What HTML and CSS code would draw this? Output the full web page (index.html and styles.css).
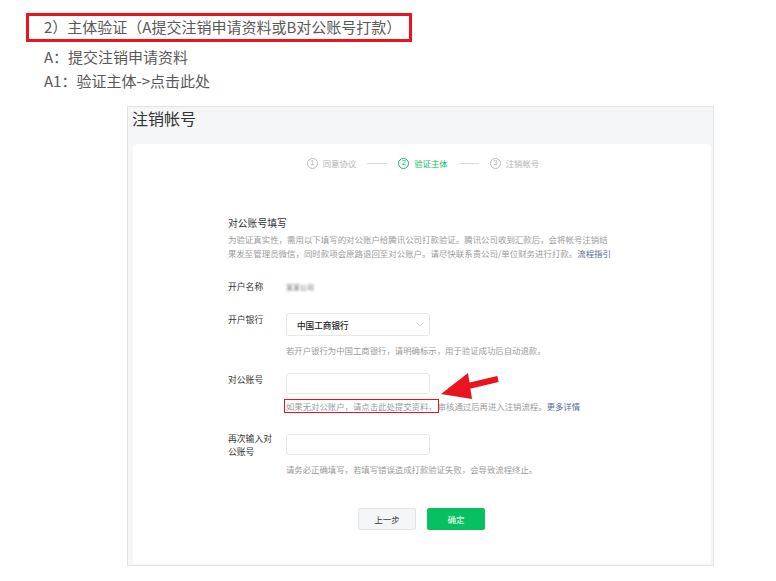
FILE: index.html
```html
<!DOCTYPE html>
<html lang="zh-CN">
<head>
<meta charset="utf-8">
<title>注销帐号 - 主体验证</title>
<link rel="stylesheet" href="styles.css">
</head>
<body>
<div class="doc">
  <div class="hl-title">2）主体验证（A提交注销申请资料或B对公账号打款）</div>
  <p class="doc-line">A：提交注销申请资料</p>
  <p class="doc-line">A1：验证主体-&gt;点击此处</p>

  <div class="shot">
    <div class="shot-title">注销帐号</div>
    <div class="card">
      <div class="steps">
        <div class="step"><span class="num">1</span>同意协议</div>
        <span class="step-line"></span>
        <div class="step active"><span class="num">2</span>验证主体</div>
        <span class="step-line"></span>
        <div class="step"><span class="num">3</span>注销帐号</div>
      </div>

      <div class="form">
        <div class="form-head">对公账号填写</div>
        <p class="form-desc">为验证真实性，需用以下填写的对公账户给腾讯公司打款验证。腾讯公司收到汇款后，会将帐号注销结<br>果发至管理员微信，同时款项会原路退回至对公账户。请尽快联系贵公司/单位财务进行打款。<a class="link">流程指引</a></p>

        <div class="row row-name">
          <div class="label">开户名称</div>
          <div class="field"><span class="blurred">某某公司</span></div>
        </div>

        <div class="row row-bank">
          <div class="label">开户银行</div>
          <div class="field">
            <div class="select">
              <span>中国工商银行</span>
              <svg class="chev" width="8" height="5" viewBox="0 0 8 5"><polyline points="0.5,0.5 4,4 7.5,0.5" fill="none" stroke="#c8c8c8" stroke-width="0.9"/></svg>
            </div>
            <div class="hint">若开户银行为中国工商银行，请明确标示，用于验证成功后自动退款。</div>
          </div>
        </div>

        <div class="row row-acct">
          <div class="label">对公账号</div>
          <div class="field">
            <div class="input"></div>
            <div class="hint hint-tight"><span class="mark">如果无对公账户，请点击此处提交资料，</span>审核通过后再进入注销流程。<a class="link">更多详情</a></div>
          </div>
        </div>

        <div class="row row-again">
          <div class="label label-2">再次输入对<br>公账号</div>
          <div class="field">
            <div class="input input-2"></div>
            <div class="hint">请务必正确填写，若填写错误造成打款验证失败，会导致流程终止。</div>
          </div>
        </div>

        <div class="actions">
          <button class="btn btn-default">上一步</button>
          <button class="btn btn-primary">确定</button>
        </div>
      </div>
    </div>

    <svg class="arrow" width="64" height="32" viewBox="0 0 64 32">
      <polygon points="1,22 28,1 32,27" fill="#e8141e"/>
      <line x1="26" y1="14.5" x2="58" y2="7" stroke="#e8141e" stroke-width="6"/>
    </svg>
  </div>
</div>
</body>
</html>
```

FILE: styles.css
```css
* { box-sizing: border-box; }
html, body { margin: 0; padding: 0; background: #fff; }
body {
  font-family: "Noto Sans CJK SC", "Noto Sans", "Liberation Sans", sans-serif;
  color: #555;
}
.doc { padding: 13px 0 0 26px; }

.hl-title {
  display: inline-block;
  width: 386px;
  height: 29px;
  border: 3px solid #e8141e;
  padding-left: 15px;
  font-size: 15px;
  line-height: 22px;
  color: #595959;
  white-space: nowrap;
}
.doc-line {
  margin: 0;
  padding-left: 18px;
  font-size: 15px;
  line-height: 24px;
  height: 24px;
  color: #595959;
}
.doc-line:first-of-type { margin-top: 3px; }

.shot {
  position: relative;
  margin: 13px 0 0 101px;
  width: 587px;
  height: 460px;
  border: 1px solid #e3e3e3;
  background: #f5f6f7;
  display: flex;
  flex-direction: column;
}
.shot-title {
  height: 37px;
  padding-left: 4px;
  font-size: 16px;
  line-height: 22px;
  color: #333;
}
.card {
  flex: 1;
  margin: 0 2px 1px 5px;
  background: #fff;
  border-radius: 4px 4px 0 0;
  padding-top: 13px;
}

.steps {
  display: flex;
  justify-content: center;
  align-items: center;
  height: 12px;
  gap: 11px;
  font-size: 8.4px;
  color: #b2b2b2;
  padding-left: 2px;
}
.step { display: flex; align-items: center; gap: 5px; white-space: nowrap; }
.step .num {
  width: 11px;
  height: 11px;
  border: 1px solid #b9b9b9;
  border-radius: 50%;
  display: inline-flex;
  align-items: center;
  justify-content: center;
  font-family: "Liberation Sans", sans-serif;
  font-size: 7.5px;
  line-height: 1;
}
.step.active { color: #07c160; }
.step.active .num { border-color: #07c160; }
.step-line { width: 20px; height: 1px; background: #dcdcdc; }

.form { padding: 47px 0 0 95px; }
.form-head {
  font-size: 9.8px;
  line-height: 14px;
  color: #353535;
}
.form-desc {
  margin: 2px 0 0;
  font-size: 8.45px;
  line-height: 14px;
  color: #9a9a9a;
  white-space: nowrap;
}
.link { color: #576b95; }

.row { display: flex; }
.label {
  width: 58px;
  flex: none;
  font-size: 8.8px;
  line-height: 14px;
  color: #353535;
}
.field { display: flex; flex-direction: column; align-items: flex-start; }
.row-name { margin-top: 20px; }
.row-bank { margin-top: 19px; }
.row-acct { margin-top: 16px; }
.row-again { margin-top: 20px; }

.blurred {
  font-size: 7px;
  line-height: 14px;
  color: #6f6f6f;
  filter: blur(0.8px);
}
.select {
  width: 144px;
  height: 23px;
  border: 1px solid #e7e7e7;
  border-radius: 3px;
  display: flex;
  align-items: center;
  justify-content: space-between;
  padding: 0 5px 0 10px;
  font-size: 8.6px;
  font-weight: 500;
  color: #222;
}
.chev { display: block; }
.input {
  width: 144px;
  height: 21px;
  border: 1px solid #e7e7e7;
  border-radius: 3px;
}
.input-2 { height: 21px; margin-top: 1px; }
.hint {
  margin-top: 7px;
  font-size: 8.4px;
  line-height: 14px;
  color: #9a9a9a;
  white-space: nowrap;
}
.hint-tight { margin-top: 5px; }
.mark {
  outline: 1.6px solid #e8141e;
  outline-offset: 0;
  margin-left: -1px;
  padding: 0 1px;
}
.label-2 { line-height: 13px; margin-top: -1px; }

.actions {
  display: flex;
  gap: 11px;
  margin: 32px 0 0 130px;
}
.btn {
  width: 58px;
  height: 22px;
  border-radius: 2px;
  font-family: inherit;
  font-size: 8.5px;
  padding: 0;
  cursor: pointer;
}
.btn-default { background: #f4f5f7; border: 1px solid #e4e4e4; color: #333; }
.btn-primary { background: #07c160; border: 1px solid #07c160; color: #fff; }

.arrow {
  position: absolute;
  left: 312px;
  top: 265px;
}
```
